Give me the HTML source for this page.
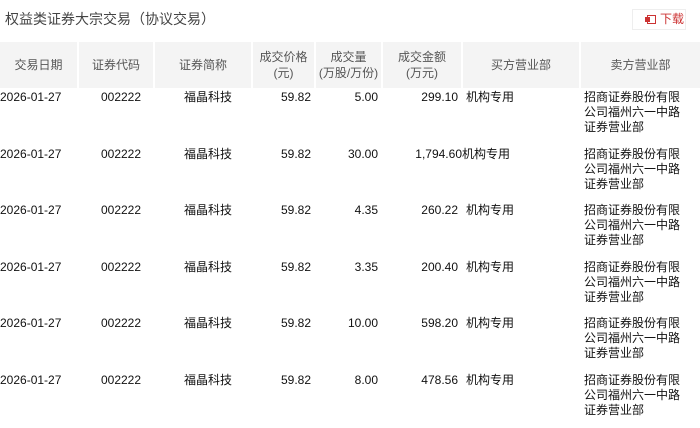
<!DOCTYPE html>
<html><head><meta charset="utf-8"><style>
body{margin:0;width:700px;height:427px;background:#fff;font-family:"Liberation Sans","Noto Sans CJK SC",sans-serif;color:#333;overflow:hidden;position:relative}
.t{position:absolute;left:5px;top:9px;font-size:14px;color:#444}
.dl{position:absolute;left:632px;top:9px;width:52px;height:19px;border:1px solid #eee;font-size:12px;color:#c33;line-height:19px}
.dl i{position:absolute;left:14px;top:5px;width:7px;height:7px;border:1px solid #c33;background:#fff}
.dl i:before{content:"";position:absolute;left:-3px;top:1px;width:5px;height:5px;background:#c33}
.dl span{position:absolute;left:27px;top:0}
table{position:absolute;left:0;top:42px;border-collapse:collapse;font-size:12px;table-layout:fixed;width:700px}
th{background:#f4f4f4;font-weight:normal;color:#555;height:46px;border-left:2px solid #fff;line-height:16px;padding:0}
th:first-child{border-left:none}
td{height:54.6px;vertical-align:top;padding:2px 0 0 0;line-height:15px;color:#111}
td.r{text-align:right;padding-right:4px}
td.c{text-align:center;padding-left:10px}
td.l{text-align:left;padding-left:4px}
</style></head><body>
<div class="t">权益类证券大宗交易（协议交易）</div>
<div class="dl"><i></i><span>下载</span></div>
<table>
<colgroup><col style="width:78px"><col style="width:76px"><col style="width:98px"><col style="width:63px"><col style="width:67px"><col style="width:80px"><col style="width:118px"><col style="width:120px"></colgroup>
<tr><th>交易日期</th><th>证券代码</th><th>证券简称</th><th>成交价格<br>(元)</th><th>成交量<br>(万股/万份)</th><th>成交金额<br>(万元)</th><th>买方营业部</th><th>卖方营业部</th></tr>
<tr><td>2026-01-27</td><td class="c">002222</td><td class="c">福晶科技</td><td class="r">59.82</td><td class="r">5.00</td><td class="r">299.10</td><td class="l">机构专用</td><td class="l">招商证券股份有限<br>公司福州六一中路<br>证券营业部</td></tr>
<tr><td>2026-01-27</td><td class="c">002222</td><td class="c">福晶科技</td><td class="r">59.82</td><td class="r">30.00</td><td class="r" style="padding-right:0">1,794.60</td><td class="l" style="padding-left:0">机构专用</td><td class="l">招商证券股份有限<br>公司福州六一中路<br>证券营业部</td></tr>
<tr><td>2026-01-27</td><td class="c">002222</td><td class="c">福晶科技</td><td class="r">59.82</td><td class="r">4.35</td><td class="r">260.22</td><td class="l">机构专用</td><td class="l">招商证券股份有限<br>公司福州六一中路<br>证券营业部</td></tr>
<tr><td>2026-01-27</td><td class="c">002222</td><td class="c">福晶科技</td><td class="r">59.82</td><td class="r">3.35</td><td class="r">200.40</td><td class="l">机构专用</td><td class="l">招商证券股份有限<br>公司福州六一中路<br>证券营业部</td></tr>
<tr><td>2026-01-27</td><td class="c">002222</td><td class="c">福晶科技</td><td class="r">59.82</td><td class="r">10.00</td><td class="r">598.20</td><td class="l">机构专用</td><td class="l">招商证券股份有限<br>公司福州六一中路<br>证券营业部</td></tr>
<tr><td>2026-01-27</td><td class="c">002222</td><td class="c">福晶科技</td><td class="r">59.82</td><td class="r">8.00</td><td class="r">478.56</td><td class="l">机构专用</td><td class="l">招商证券股份有限<br>公司福州六一中路<br>证券营业部</td></tr>
</table>
</body></html>
